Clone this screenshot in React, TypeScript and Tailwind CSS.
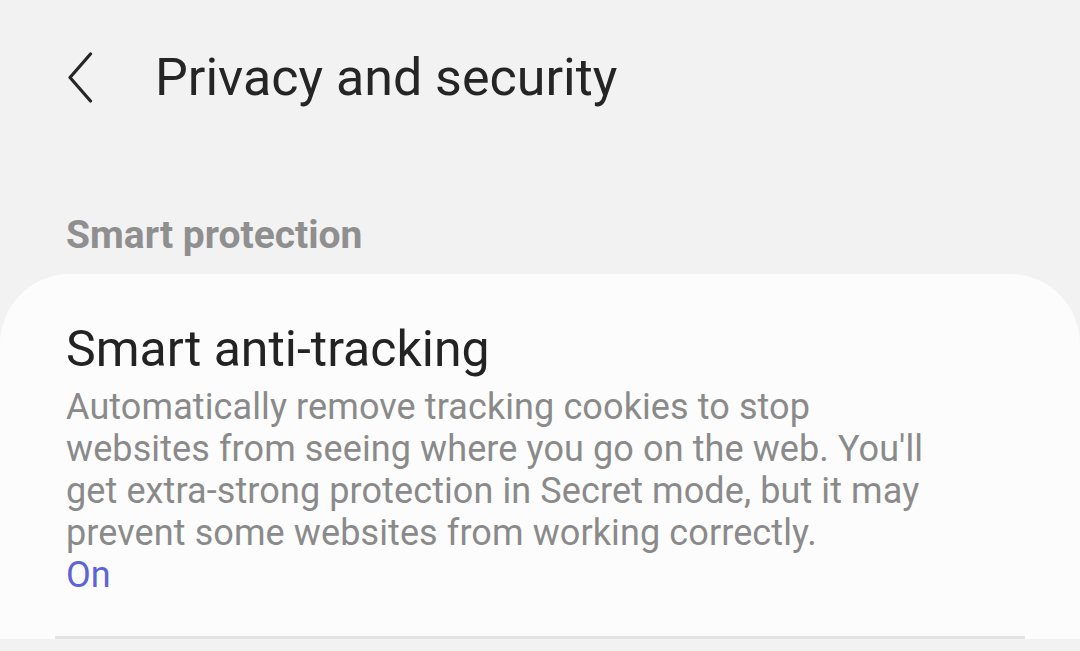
export default function App() {
  return (
    <div className="w-[1080px] h-[651px] overflow-hidden bg-[#f2f2f2] font-['Roboto',sans-serif]">
      <header className="flex items-center pt-[52px] pl-[68px]">
        <svg width="25" height="52" viewBox="0 0 25 52" className="shrink-0" fill="none">
          <path d="M22.5 2 L2 25.5 L22.5 49" stroke="#262626" strokeWidth="3.2" strokeLinecap="round" strokeLinejoin="round" />
        </svg>
        <h1 className="ml-[62px] text-[52px] leading-[52px] text-[#252525]">Privacy and security</h1>
      </header>

      <h2 className="mt-[112px] pl-[66px] text-[39px] leading-[39px] font-bold text-[#8f8f8f]">Smart protection</h2>

      <section className="mt-[19px] rounded-t-[70px] bg-[#fcfcfc] pt-[50px]">
        <div className="px-[66px]">
          <h3 className="text-[50px] leading-[50px] text-[#232323]">Smart anti-tracking</h3>
          <p className="mt-[12px] max-w-[880px] text-[36px] leading-[42px] tracking-[0.1px] text-[#8a8a8a]">
            Automatically remove tracking cookies to stop websites from seeing where you go on the web. You'll get extra-strong protection in Secret mode, but it may prevent some websites from working correctly.
          </p>
          <p className="text-[36px] leading-[42px] tracking-[0.1px] text-[#5c64d6]">On</p>
        </div>
        <div className="mx-[55px] mt-[40px] h-[3px] bg-[#e3e3e3]" />
      </section>
    </div>
  );
}
